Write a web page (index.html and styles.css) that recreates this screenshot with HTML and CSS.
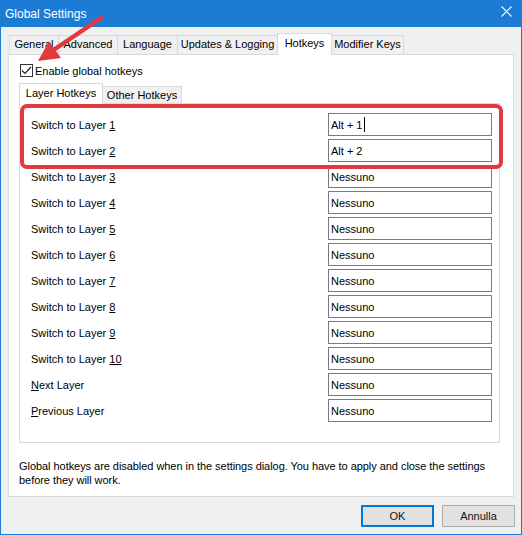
FILE: index.html
```html
<!DOCTYPE html>
<html lang="en">
<head>
    <meta charset="UTF-8">
    <title>Global Settings</title>
    <link rel="stylesheet" href="styles.css">
</head>
<body>
    <div class="window">
        <div class="titlebar">
            <span class="title">Global Settings</span>
            <svg class="close" width="11" height="11" viewBox="0 0 11 11">
                <path d="M0.5 0.5 L10.5 10.5 M10.5 0.5 L0.5 10.5" stroke="#fff" stroke-width="1.1" fill="none"/>
            </svg>
        </div>

        <div class="tabs outer-tabs">
            <div class="tab w-general">General</div>
            <div class="tab w-advanced">Advanced</div>
            <div class="tab w-language">Language</div>
            <div class="tab w-updates">Updates &amp; Logging</div>
            <div class="tab active w-hotkeys">Hotkeys</div>
            <div class="tab w-modifier">Modifier Keys</div>
        </div>

        <div class="page">
            <label class="check-row">
                <span class="checkbox">
                    <svg width="11" height="11" viewBox="0 0 11 11">
                        <path d="M1 5.5 L4 8.5 L10 2" stroke="#222" stroke-width="1.2" fill="none"/>
                    </svg>
                </span>
                <span>Enable <u>g</u>lobal hotkeys</span>
            </label>

            <div class="tabs inner-tabs">
                <div class="tab active w-layer">Layer Hotkeys</div>
                <div class="tab w-other">Other Hotkeys</div>
            </div>

            <div class="panel">
                <div class="hotkey-grid">
                    <span class="key-label">Switch to Layer <u>1</u></span>
                    <div class="key-box">Alt + 1<span class="caret"></span></div>
                    <span class="key-label">Switch to Layer <u>2</u></span>
                    <div class="key-box">Alt + 2</div>
                    <span class="key-label">Switch to Layer <u>3</u></span>
                    <div class="key-box">Nessuno</div>
                    <span class="key-label">Switch to Layer <u>4</u></span>
                    <div class="key-box">Nessuno</div>
                    <span class="key-label">Switch to Layer <u>5</u></span>
                    <div class="key-box">Nessuno</div>
                    <span class="key-label">Switch to Layer <u>6</u></span>
                    <div class="key-box">Nessuno</div>
                    <span class="key-label">Switch to Layer <u>7</u></span>
                    <div class="key-box">Nessuno</div>
                    <span class="key-label">Switch to Layer <u>8</u></span>
                    <div class="key-box">Nessuno</div>
                    <span class="key-label">Switch to Layer <u>9</u></span>
                    <div class="key-box">Nessuno</div>
                    <span class="key-label">Switch to Layer <u>10</u></span>
                    <div class="key-box">Nessuno</div>
                    <span class="key-label"><u>N</u>ext Layer</span>
                    <div class="key-box">Nessuno</div>
                    <span class="key-label"><u>P</u>revious Layer</span>
                    <div class="key-box">Nessuno</div>
                </div>
            </div>

            <p class="note">Global hotkeys are disabled when in the settings dialog. You have to apply and close the settings before they will work.</p>
        </div>

        <div class="buttons">
            <button class="btn default">OK</button>
            <button class="btn">Annulla</button>
        </div>
    </div>

    <!-- callout drawn over the dialog -->
    <svg class="callout" width="522" height="535" viewBox="0 0 522 535">
        <rect x="22" y="106" width="479" height="61" rx="5" fill="none" stroke="#e0393e" stroke-width="4"/>
        <line x1="101" y1="18" x2="52" y2="51" stroke="#e0393e" stroke-width="4.5" stroke-linecap="round"/>
        <polygon points="38,61 49,41.5 61,58" fill="#e0393e"/>
    </svg>
</body>
</html>
```

FILE: styles.css
```css
/* Dialog base */
body {
    margin: 0;
    width: 522px;
    height: 535px;
    overflow: hidden;
    position: relative;
    font-family: "Liberation Sans", Arial, sans-serif;
    font-size: 11px;
    color: #000;
}
.window {
    box-sizing: border-box;
    width: 522px;
    height: 535px;
    border: 1px solid #1c7cd5;
    background-color: #f0f0f0;
}
.titlebar {
    height: 26px;
    background-color: #1c7cd5;
    color: #fff;
    display: flex;
    align-items: center;
    justify-content: space-between;
    padding: 0 9px 0 4px;
}
.title {
    font-size: 12px;
    margin-top: -1px;
}
.close {
    margin-top: -5px;
}
/* Tabs */
.tabs {
    display: flex;
    align-items: flex-end;
    position: relative;
    z-index: 2;
}
.tab {
    box-sizing: border-box;
    border: 1px solid #d9d9d9;
    border-bottom: none;
    background-color: #f0f0f0;
    margin-left: -1px;
    text-align: center;
    white-space: nowrap;
}
.tab:first-child {
    margin-left: 0;
}
.tab.active {
    background-color: #fff;
    margin-bottom: -1px;
    position: relative;
    z-index: 3;
}
.outer-tabs {
    margin-top: 6px;
    padding-left: 8px;
    height: 21px;
}
.outer-tabs .tab {
    height: 19px;
    line-height: 17px;
}
.outer-tabs .tab.active {
    height: 22px;
    line-height: 19px;
}
.w-general { width: 50px; }
.w-advanced { width: 60px; }
.w-language { width: 61px; }
.w-updates { width: 101px; }
.w-hotkeys { width: 55px; }
.w-modifier { width: 73px; }
.inner-tabs {
    margin-top: 6px;
    height: 20px;
}
.inner-tabs .tab {
    height: 17px;
    line-height: 16px;
}
.inner-tabs .tab.active {
    height: 21px;
    line-height: 18px;
}
.w-layer { width: 84px; }
.w-other { width: 80px; }
/* Tab page */
.page {
    box-sizing: border-box;
    height: 443px;
    margin: 0 7px;
    padding: 9px 13px 0 10px;
    background-color: #fff;
    border: 1px solid #d9d9d9;
    position: relative;
    z-index: 1;
}
.check-row {
    display: flex;
    align-items: center;
    gap: 2px;
    height: 13px;
    margin-left: 1px;
}
.checkbox {
    box-sizing: border-box;
    width: 13px;
    height: 13px;
    border: 1px solid #333;
    display: flex;
    align-items: center;
    justify-content: center;
}
.panel {
    box-sizing: border-box;
    width: 481px;
    height: 340px;
    border: 1px solid #d9d9d9;
    padding: 9px 7px 0 11px;
}
.hotkey-grid {
    display: grid;
    grid-template-columns: 1fr 164px;
    grid-auto-rows: 23px;
    row-gap: 3px;
    align-items: center;
}
.key-box {
    box-sizing: border-box;
    height: 23px;
    border: 1px solid #7a7a7a;
    padding: 0 2px;
    line-height: 20px;
    display: flex;
    align-items: center;
}
.caret {
    display: inline-block;
    width: 1px;
    height: 15px;
    margin-left: 1px;
    background-color: #000;
}
.note {
    margin: 16px -12px 0 0;
    line-height: 14px;
    letter-spacing: -0.05px;
}
/* Dialog buttons */
.buttons {
    display: flex;
    justify-content: flex-end;
    gap: 8px;
    margin-top: 8px;
    padding-right: 6px;
}
.btn {
    box-sizing: border-box;
    width: 73px;
    height: 22px;
    font-family: inherit;
    font-size: 11px;
    color: #111;
    background-color: #e1e1e1;
    border: 1px solid #adadad;
    padding: 0;
}
.btn.default {
    border: 2px solid #0078d7;
}
.callout {
    position: absolute;
    top: 0;
    left: 0;
    pointer-events: none;
    z-index: 10;
}
```
